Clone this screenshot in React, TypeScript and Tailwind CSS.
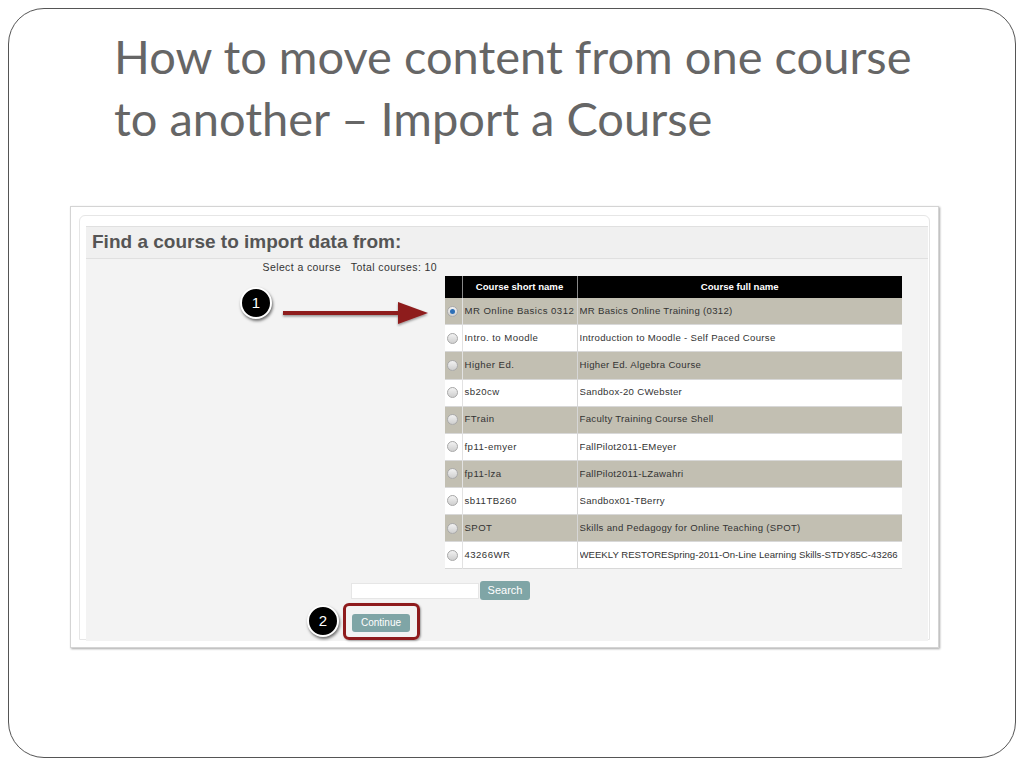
import React from 'react';

const courses = [
  { short: 'MR Online Basics 0312', full: 'MR Basics Online Training (0312)' },
  { short: 'Intro. to Moodle', full: 'Introduction to Moodle - Self Paced Course' },
  { short: 'Higher Ed.', full: 'Higher Ed. Algebra Course' },
  { short: 'sb20cw', full: 'Sandbox-20 CWebster' },
  { short: 'FTrain', full: 'Faculty Training Course Shell' },
  { short: 'fp11-emyer', full: 'FallPilot2011-EMeyer' },
  { short: 'fp11-lza', full: 'FallPilot2011-LZawahri' },
  { short: 'sb11TB260', full: 'Sandbox01-TBerry' },
  { short: 'SPOT', full: 'Skills and Pedagogy for Online Teaching (SPOT)' },
  { short: '43266WR', full: 'WEEKLY RESTORESpring-2011-On-Line Learning Skills-STDY85C-43266' },
];

function Radio({ checked }: { checked: boolean }) {
  return (
    <span className="inline-flex h-[11px] w-[11px] items-center justify-center rounded-full border border-[#a9a9a9] bg-gradient-to-b from-[#f2f2f2] to-[#cfcfcf]">
      {checked && <span className="h-[5px] w-[5px] rounded-full bg-[#2d6fb7]" />}
    </span>
  );
}

function Badge({ n, className }: { n: number; className: string }) {
  return (
    <div
      className={`absolute flex h-[32px] w-[32px] items-center justify-center rounded-full border-2 border-white bg-black text-[15px] text-white shadow-[1px_2px_3px_rgba(0,0,0,0.55)] ${className}`}
    >
      {n}
    </div>
  );
}

export default function App() {
  return (
    <div className="h-[768px] w-[1024px] bg-white p-[8px]">
      <div className="h-[750px] rounded-[36px] border border-[#555] pl-[105px] pt-[16px]">
        <h1 className="font-['Lato',sans-serif] text-[47px] leading-[62px] text-[#666]">
          How to move content from one course
          <br />
          to another – Import a Course
        </h1>

        <div className="ml-[-44px] mt-[57px] h-[442px] w-[869px] border border-[#d4d4d4] bg-white p-[8px] shadow-[1px_1px_2px_rgba(0,0,0,0.35)]">
          <div className="h-[425px] rounded-t-[6px] border border-[#e6e6e6] pl-[6px] pr-[1px] pt-[10px]">
            <div className="relative h-[415px] bg-[#f3f3f3] font-['Liberation_Sans',Arial,sans-serif]">
              <div className="flex h-[33px] items-center border-y border-[#e0e0e0] bg-[#f0f0f0] pl-[6px] text-[19px] font-bold text-[#555]">
                Find a course to import data from:
              </div>

              <div className="mt-[1px] w-[351px] text-right text-[10.5px] tracking-[0.4px] text-[#333]">
                Select a course&nbsp;&nbsp;&nbsp;Total courses: 10
              </div>

              <table className="ml-[359px] mt-0 w-[457px] border-collapse text-[9.6px] tracking-[0.3px] text-[#333]">
                <thead>
                  <tr className="h-[22px] bg-black text-white">
                    <th className="w-[17px] border-r border-[#888]" />
                    <th className="w-[115px] border-r border-[#888] font-bold tracking-normal">Course short name</th>
                    <th className="font-bold tracking-normal">Course full name</th>
                  </tr>
                </thead>
                <tbody>
                  {courses.map((c, i) => (
                    <tr
                      key={c.short}
                      className={`h-[27.1px] border-b border-[#d8d8d8] ${i % 2 === 0 ? 'bg-[#c2bfb2]' : 'bg-white'}`}
                    >
                      <td className="border-r border-[#e2e2e2] pl-[2px] align-middle">
                        <div className="flex items-center">
                          <Radio checked={i === 0} />
                        </div>
                      </td>
                      <td className="whitespace-nowrap border-r border-[#d6d6d6] pl-[2px] tracking-[0.45px]">{c.short}</td>
                      <td className={`whitespace-nowrap pl-[2px] ${c.full.length > 50 ? 'tracking-normal' : ''}`}>
                        <div className="w-[322px] overflow-hidden">{c.full}</div>
                      </td>
                    </tr>
                  ))}
                </tbody>
              </table>

              <div className="ml-[265px] mt-[12px] flex items-center gap-[1px]">
                <div className="h-[16px] w-[128px] border border-[#e6e6e6] bg-white" />
                <button className="h-[19px] w-[50px] rounded-[3px] bg-[#7fa5a6] text-[11px] text-white">Search</button>
              </div>
              <div className="ml-[266px] mt-[9px]">
                <button className="h-[18px] w-[58px] rounded-[3px] bg-[#7fa5a6] text-[10px] text-white">Continue</button>
              </div>

              <Badge n={1} className="left-[154px] top-[61px]" />
              <svg className="absolute left-[194px] top-[75px]" width="150" height="26" viewBox="0 0 150 26">
                <defs>
                  <filter id="sh" x="-10%" y="-50%" width="120%" height="200%">
                    <feDropShadow dx="0" dy="1.5" stdDeviation="1" floodColor="#000" floodOpacity="0.4" />
                  </filter>
                </defs>
                <g filter="url(#sh)">
                  <rect x="3" y="10" width="118" height="4" fill="#8e1b1d" />
                  <polygon points="118,1 148,12 118,23" fill="#8e1b1d" />
                </g>
              </svg>

              <Badge n={2} className="left-[221px] top-[379px]" />
              <div className="absolute left-[257px] top-[377px] h-[37px] w-[77px] rounded-[6px] border-[3px] border-[#8e1b1d] shadow-[1px_1px_2px_rgba(0,0,0,0.35)]" />
            </div>
          </div>
        </div>
      </div>
    </div>
  );
}
